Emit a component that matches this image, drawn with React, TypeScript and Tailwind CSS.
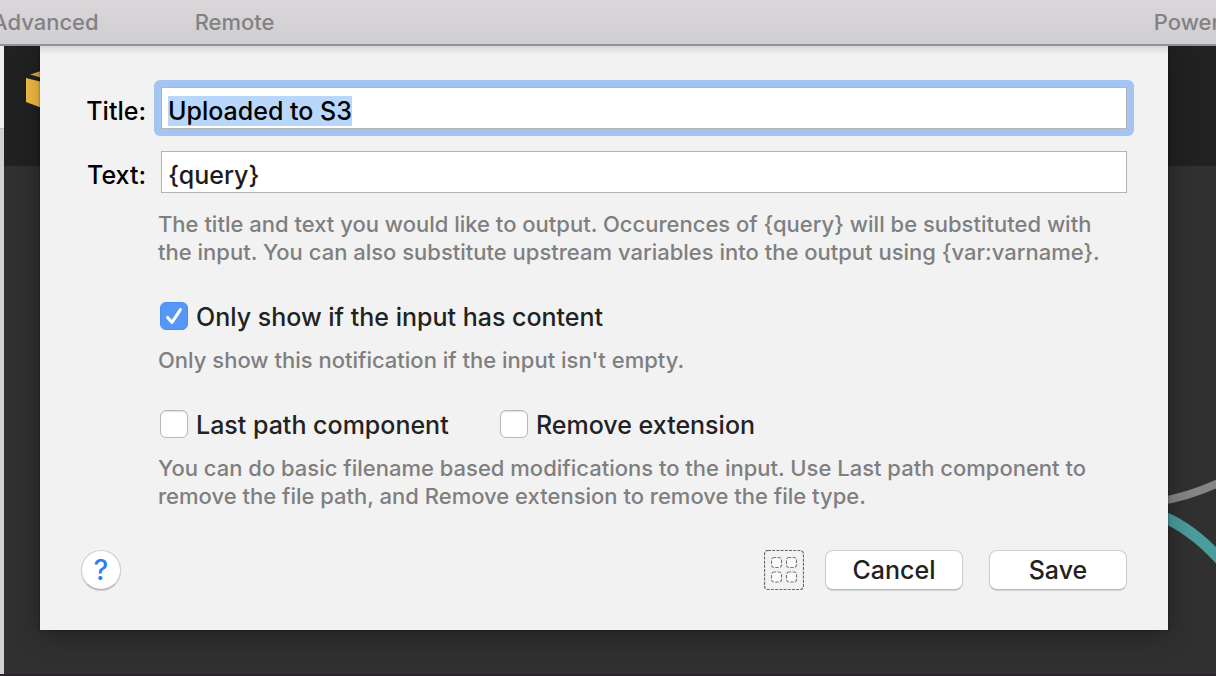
import { useEffect, useRef, useState } from "react";

function TextField({
  id,
  label,
  initial,
  focused = false,
}: {
  id: string;
  label: string;
  initial: string;
  focused?: boolean;
}) {
  const ref = useRef<HTMLInputElement>(null);
  useEffect(() => {
    if (focused && ref.current) {
      ref.current.focus();
      ref.current.select();
    }
  }, [focused]);

  return (
    <>
      <label htmlFor={id} className="pt-1.5 text-right text-[25px] leading-8 whitespace-nowrap">
        {label}
      </label>
      <div className={focused ? "-m-[7px] rounded-md bg-[#a4c5f2] p-[7px]" : ""}>
        <input
          id={id}
          ref={ref}
          type="text"
          defaultValue={initial}
          className="block h-[42px] w-full border border-[#b4b4b4] bg-white px-1.5 pt-1.5 text-[25px] leading-[34px] text-[#1c1c1c] outline-none selection:bg-[#b8d7fb] selection:text-black"
        />
      </div>
    </>
  );
}

function CheckOption({ label, initial = false }: { label: string; initial?: boolean }) {
  const [checked, setChecked] = useState(initial);
  return (
    <label className="flex items-center gap-2 text-[25px] text-[#222222]">
      <span className="grid h-7 w-7 shrink-0">
        <input
          type="checkbox"
          checked={checked}
          onChange={(e) => setChecked(e.target.checked)}
          className="col-start-1 row-start-1 h-7 w-7 appearance-none rounded-md border border-[#b8b8b8] bg-white shadow-[inset_0_1px_1px_rgba(0,0,0,0.12)] checked:border-[#4a8df0] checked:bg-[#5596f7] checked:shadow-none"
        />
        {checked && (
          <svg viewBox="0 0 28 28" className="pointer-events-none col-start-1 row-start-1 h-7 w-7" aria-hidden="true">
            <path d="M7.6 15.4 12 20.4 20.4 7.6" fill="none" stroke="#fff" strokeWidth="3" strokeLinecap="round" strokeLinejoin="round" />
          </svg>
        )}
      </span>
      <span className="pt-0.5 leading-[30px]">{label}</span>
    </label>
  );
}

function Hint({ children }: { children: React.ReactNode }) {
  return <p className="text-[22px] leading-7 text-[#7f7f7f]">{children}</p>;
}

function PushButton({ children }: { children: React.ReactNode }) {
  return (
    <button
      type="button"
      className="h-10 w-[138px] rounded-lg border border-[#cfcfcf] border-b-[#b8b8b8] bg-white text-[25px] leading-8 text-[#222222] shadow-[0_1px_1px_rgba(0,0,0,0.12)]"
    >
      {children}
    </button>
  );
}

function PlaceholderGridIcon() {
  return (
    <svg viewBox="0 0 40 40" className="h-10 w-10" fill="none" stroke="#777" aria-hidden="true">
      <rect x="0.5" y="0.5" width="39" height="39" rx="3.5" strokeWidth="1.2" strokeDasharray="3 1.2" stroke="#6a6a6a" />
      {[7.5, 22.5].map((x) =>
        [7.5, 22].map((y) => (
          <rect key={`${x}-${y}`} x={x} y={y} width="10" height="10" rx="2.5" fill="#fafafa" strokeWidth="1.1" strokeDasharray="3.4 1.4" strokeDashoffset="1.2" />
        )),
      )}
    </svg>
  );
}

export default function App() {
  return (
    <div className="flex min-h-screen flex-col overflow-hidden bg-[#303030] font-['Inter','Liberation_Sans',sans-serif] font-medium text-black">
      <header className="relative z-10 flex h-[46px] items-center justify-between overflow-hidden border-b-2 border-[#929193] bg-linear-to-b from-[#d9d7da] to-[#d0ced1] text-[22px] leading-7 text-[#838184]">
        <nav className="-ml-2 flex gap-24">
          <a href="#advanced">Advanced</a>
          <a href="#remote">Remote</a>
        </nav>
        <a href="#power" className="-mr-1">Power</a>
      </header>

      <main className="relative flex-1 border-b-2 border-[#292528]">
        <div className="absolute inset-x-0 top-0 h-[120px] bg-[#212121]" />
        <div className="absolute inset-y-0 left-0 w-1 bg-[#d0d2d5]">
          <div className="h-[83px] border-b border-[#bfc1c4] bg-[#eceff2]" />
        </div>
        <svg viewBox="0 0 40 50" className="absolute top-5 left-5 h-[50px] w-10" aria-hidden="true">
          <path d="M6 12 22 16V42L6 36Z" fill="#f3bd45" />
          <path d="M10 8.5 24 4V12.5Z" fill="#d9a63c" />
        </svg>
        <svg viewBox="0 0 58 120" className="absolute top-[424px] right-0 h-[120px] w-[58px]" fill="none" aria-hidden="true">
          <path d="M0 31.500Q32 27 68 9.500" stroke="#858585" strokeWidth="8" />
          <path d="M0 45Q34 57 68 96" stroke="#4a9c9d" strokeWidth="11.500" />
        </svg>

        <form
          onSubmit={(e) => e.preventDefault()}
          className="relative mr-12 ml-10 bg-[#f2f2f2] pt-[41px] pr-[41px] pb-10 pl-10 shadow-[0_6px_24px_rgba(0,0,0,0.3),0_0_2px_rgba(0,0,0,0.5)]"
        >
          <div className="absolute inset-x-0 top-0 h-2 bg-linear-to-b from-[#d8d8d8] to-[#efefef]" />
          <div className="grid grid-cols-[66px_1fr] items-center gap-x-[15px] gap-y-[22px]">
            <TextField id="title" label="Title:" initial="Uploaded to S3" focused />
            <TextField id="text" label="Text:" initial="{query}" />
          </div>

          <div className="mt-[17px] pl-[78px]">
            <Hint>
              The title and text you would like to output. Occurences of {"{query}"} will be substituted with
              <br />
              the input. You can also substitute upstream variables into the output using {"{var:varname}"}.
            </Hint>
            <div className="mt-[34px] mb-[14px] flex pl-0.5">
              <CheckOption label="Only show if the input has content" initial />
            </div>
            <Hint>Only show this notification if the input isn't empty.</Hint>
            <div className="mt-[34px] mb-[14px] grid grid-cols-[340px_1fr] pl-0.5">
              <CheckOption label="Last path component" />
              <CheckOption label="Remove extension" />
            </div>
            <Hint>
              You can do basic filename based modifications to the input. Use Last path component to
              <br />
              remove the file path, and Remove extension to remove the file type.
            </Hint>
          </div>

          <div className="mt-10 flex items-center">
            <button
              type="button"
              aria-label="Help"
              className="ml-px grid h-10 w-10 place-items-center rounded-full border border-[#cfcfcf] border-b-[#b0b0b0] bg-white text-[28px] leading-8 text-[#2f7df6] shadow-[0_1px_1px_rgba(0,0,0,0.15)]"
            >
              ?
            </button>
            <button type="button" aria-label="Placeholder" className="mr-[21px] ml-auto">
              <PlaceholderGridIcon />
            </button>
            <div className="flex gap-[26px]">
              <PushButton>Cancel</PushButton>
              <PushButton>Save</PushButton>
            </div>
          </div>
        </form>
      </main>
    </div>
  );
}
